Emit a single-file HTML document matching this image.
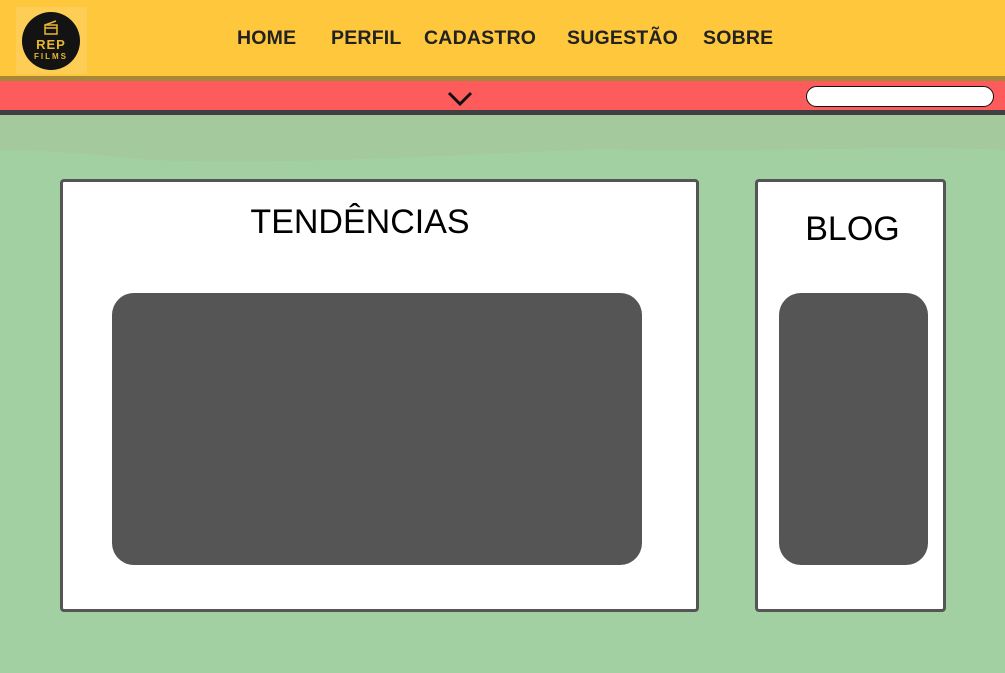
<!DOCTYPE html>
<html><head><meta charset="utf-8"><style>
*{margin:0;padding:0;box-sizing:border-box}
body{width:1005px;height:673px;overflow:hidden;background:#a3d0a3;position:relative;font-family:"Liberation Sans",sans-serif}
.hdr{position:absolute;left:0;top:0;width:1005px;height:76px;background:#fec73c}
.line{position:absolute;left:0;top:76px;width:1005px;height:5px;background:#a88838}
.red{position:absolute;left:0;top:81px;width:1005px;height:29px;background:#fe5c5c}
.dark{position:absolute;left:0;top:110px;width:1005px;height:5px;background:#404040}
.logo{position:absolute;left:16px;top:7px;width:71px;height:67px;background:#fecd55}
.nav{position:absolute;top:27px;font-weight:bold;font-size:19.5px;color:#222;letter-spacing:0.2px}
.search{position:absolute;left:806px;top:86px;width:188px;height:21px;background:#fff;border:1.5px solid #111;border-radius:11px}
.card{position:absolute;background:#fff;border:3px solid #555;border-radius:4px}
.blk{position:absolute;background:#555;border-radius:22px}
.t{position:absolute;font-size:34px;color:#000;text-align:center}
</style></head><body>
<div class="hdr"></div>
<div class="logo">
<svg width="71" height="67" viewBox="0 0 71 67">
<ellipse cx="35" cy="34" rx="29" ry="29" fill="#131313"/>
<rect x="29" y="18" width="12" height="9" fill="none" stroke="#e8b632" stroke-width="1.5"/>
<path d="M29 21 H41 M29 18 L40 14" stroke="#e8b632" stroke-width="1.5"/>
<text x="35" y="42" text-anchor="middle" font-family="Liberation Sans" font-weight="bold" font-size="13" fill="#e8b632" letter-spacing="1">REP</text>
<text x="35" y="52" text-anchor="middle" font-family="Liberation Sans" font-weight="bold" font-size="8" fill="#e8b632" letter-spacing="2">FILMS</text>
</svg></div>
<div class="nav" style="left:237px">HOME</div>
<div class="nav" style="left:331px">PERFIL</div>
<div class="nav" style="left:424px">CADASTRO</div>
<div class="nav" style="left:567px">SUGESTÃO</div>
<div class="nav" style="left:703px">SOBRE</div>
<div class="line"></div>
<div class="red"></div>
<svg style="position:absolute;left:446px;top:90px" width="28" height="18"><path d="M3 3 L14 14 L25 3" fill="none" stroke="#111" stroke-width="3"/></svg>
<div class="search"></div>
<div class="dark"></div>
<svg style="position:absolute;left:0;top:115px" width="1005" height="50"><path d="M0 0 H1005 V35 C900 30 750 38 600 34 C450 40 300 50 150 45 C80 38 40 35 0 35 Z" fill="#a3c99c"/></svg>
<div class="card" style="left:60px;top:179px;width:639px;height:433px"></div>
<div class="t" style="left:60px;top:203px;width:600px">TENDÊNCIAS</div>
<div class="blk" style="left:112px;top:293px;width:530px;height:272px"></div>
<div class="card" style="left:755px;top:179px;width:191px;height:433px"></div>
<div class="t" style="left:755px;top:210px;width:195px">BLOG</div>
<div class="blk" style="left:779px;top:293px;width:149px;height:272px"></div>
</body></html>
